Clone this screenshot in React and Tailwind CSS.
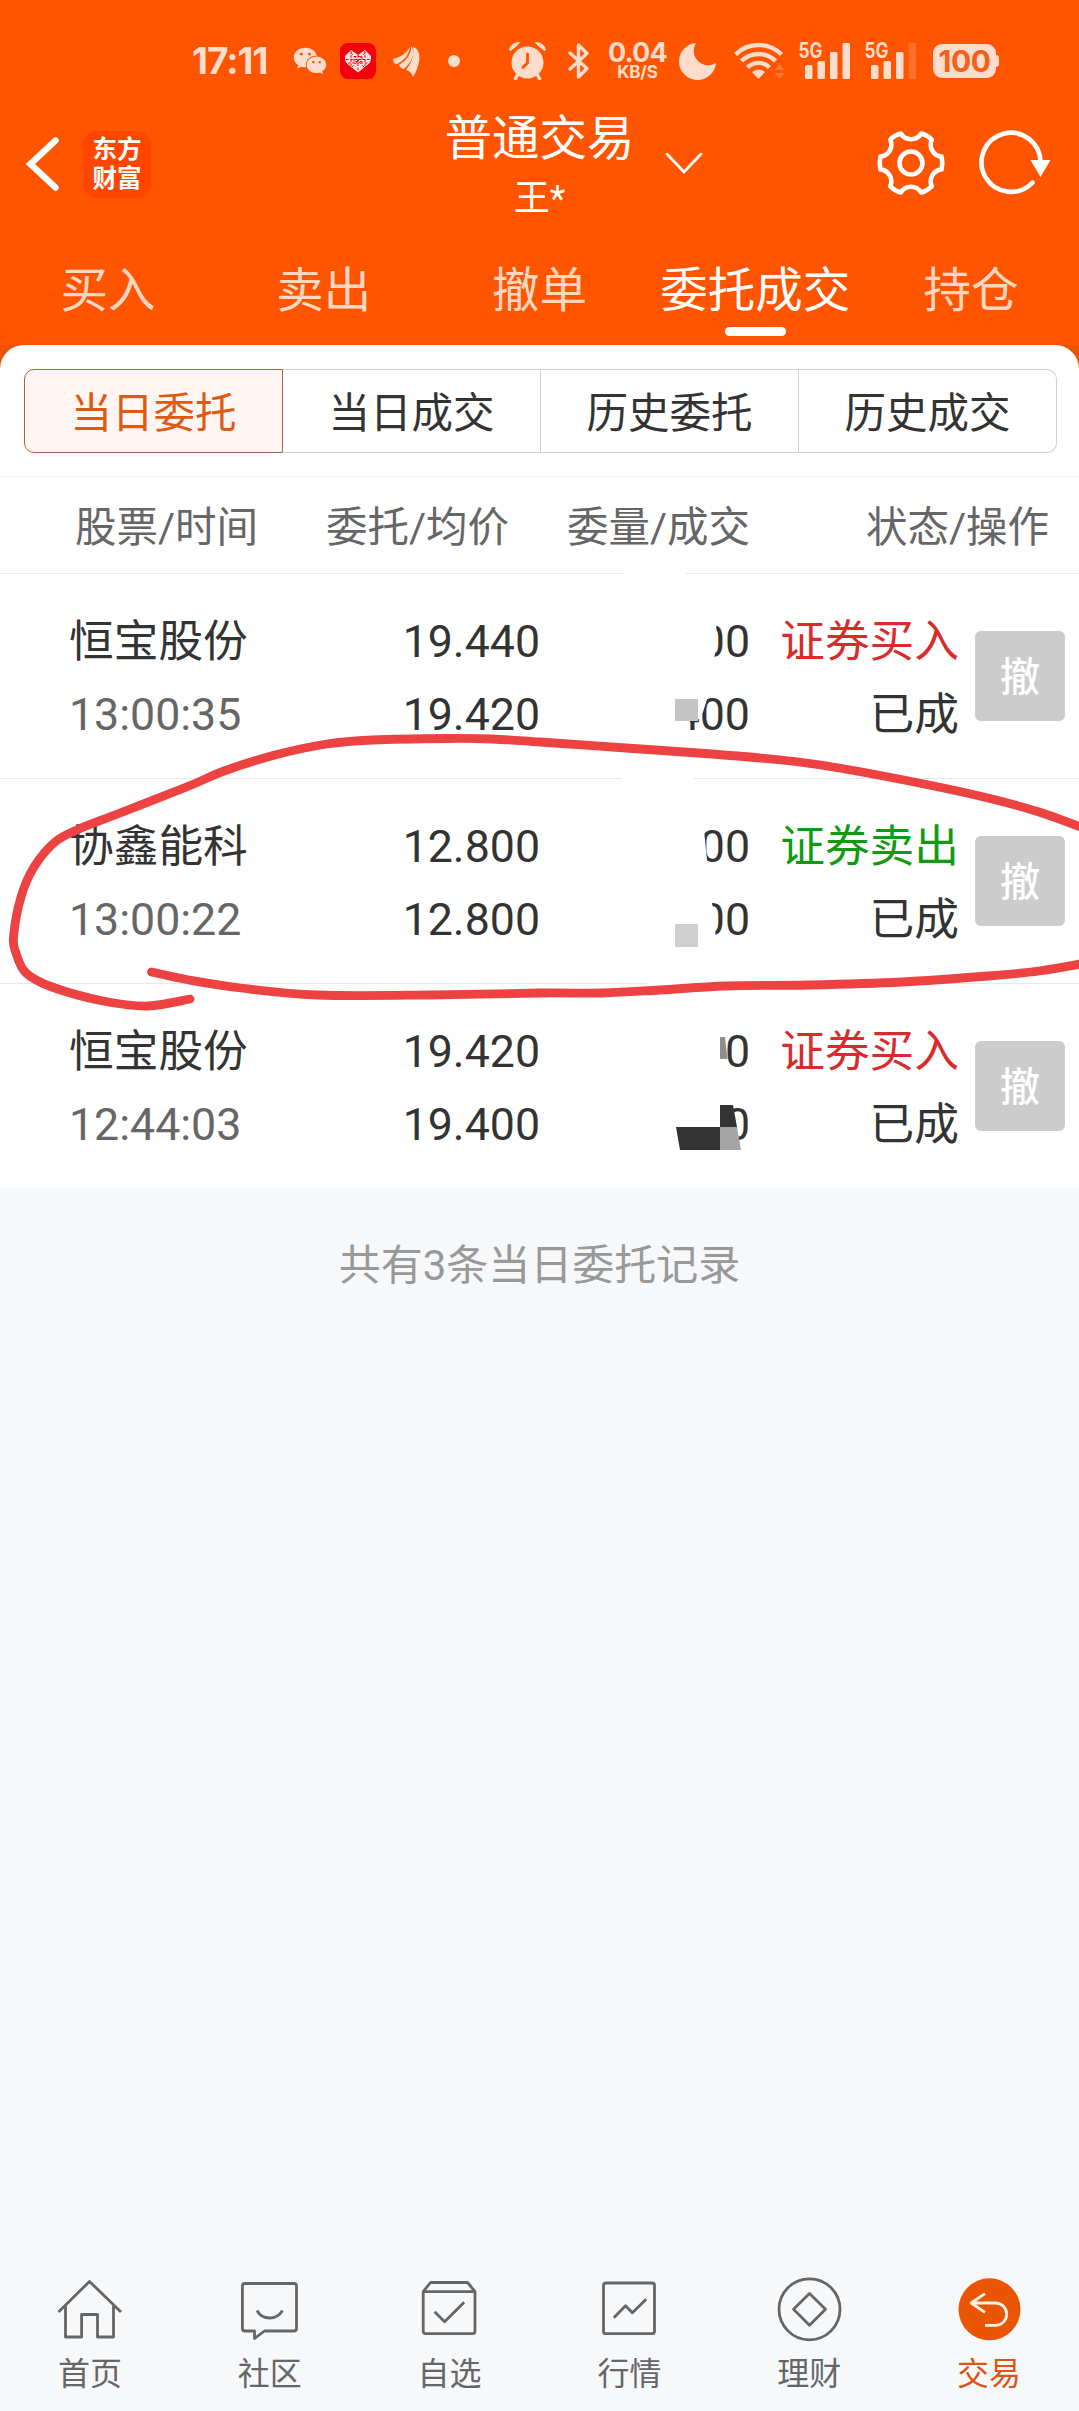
import { FaWeixin } from 'react-icons/fa'

const tabs = ['买入', '卖出', '撤单', '委托成交', '持仓']

const segments = ['当日委托', '当日成交', '历史委托', '历史成交']

const orders = [
  {
    name: '恒宝股份',
    time: '13:00:35',
    price: '19.440',
    average: '19.420',
    amount: '00',
    filled: '400',
    side: 'buy',
  },
  {
    name: '协鑫能科',
    time: '13:00:22',
    price: '12.800',
    average: '12.800',
    amount: '00',
    filled: '00',
    side: 'sell',
  },
  {
    name: '恒宝股份',
    time: '12:44:03',
    price: '19.420',
    average: '19.400',
    amount: '0',
    filled: '0',
    side: 'buy',
  },
]

const Signal = ({ weak }) => (
  <svg
    viewBox="0 0 51 38"
    className="h-[38px] w-[51px] overflow-visible"
    fill="currentColor"
  >
    <text
      x="-0.500"
      y="16"
      fontSize="21"
      fontWeight="700"
      textLength="24"
      lengthAdjust="spacingAndGlyphs"
    >
      5G
    </text>
    <rect x="6" y="23" width="7.5" height="14" rx="1.5" />
    <rect x="18.5" y="19" width="7.5" height="18" rx="1.5" />
    <rect x="31" y="10" width="7.5" height="27" rx="1.5" />
    <rect
      x="43.5"
      y="1"
      width="7.5"
      height="36"
      rx="1.5"
      opacity={weak ? 0.2 : 1}
    />
  </svg>
)

const StatusBar = () => (
  <div className="flex h-[102px] items-center pt-[20px] pl-[192px] text-[#ffdccb]">
    <span className="w-[75px] font-['Inter'] text-[37px] font-bold tracking-[-1px] whitespace-nowrap">
      17:11
    </span>
    <FaWeixin className="ml-[26px] h-[36px] w-[34px]" />
    <svg viewBox="0 0 36 36" className="ml-[13px] h-[36px] w-[36px]">
      <rect width="36" height="36" rx="8" fill="#f3000d" />
      <path
        d="M18 29.500 L7.500 21 Q4.500 18 5 13 L11 7 L18 12 L25 7 L31 13 Q31.500 18 28.500 21 Z"
        fill="#ffe3e3"
      />
      <path
        d="M18 12 V29 M6 16.500 H30 M11 8 V24 M25 8 V24 M11 10 L24 24 M25 10 L12 24 M8 20 H28 M14 13.500 h8 v5 h-8 z"
        stroke="#f3000d"
        strokeWidth="1"
        strokeDasharray="2.600 1.600"
        fill="none"
      />
    </svg>
    <svg
      viewBox="0 0 27 31"
      className="ml-[17px] h-[31px] w-[27px]"
      fill="currentColor"
    >
      <path d="M0 13 Q12 10 17 1 Q16 12 4 18 Q0 18 0 13Z" />
      <path d="M6 19 Q18 12 18.500 0 Q24 11 11 23 Q8 23 6 19Z" />
      <path d="M13 24 Q22 13 20 1 Q28 3 26 16 Q24 25 20 31 Q18 25 13 24Z" />
    </svg>
    <span className="ml-[28px] h-3 w-3 rounded-full bg-[#ffdccb]" />
    <svg
      viewBox="0 0 37 38"
      className="ml-[49px] h-[38px] w-[37px]"
      fill="currentColor"
    >
      <circle cx="18.500" cy="20.500" r="16" />
      <path d="M0 8 Q2 0 11 0 Q11 2 1.500 9Z M37 8 Q35 0 26 0 Q26 2 35.500 9Z" />
      <path
        d="M9 32 L6.500 36.500 M28 32 L30.500 36.500"
        stroke="currentColor"
        strokeWidth="3.500"
        strokeLinecap="round"
      />
      <path
        d="M18.500 12 V21 L14 25.500"
        fill="none"
        stroke="#ff5500"
        strokeWidth="2.800"
        strokeLinecap="round"
      />
    </svg>
    <svg
      viewBox="0 0 23 38"
      className="ml-[21px] h-[38px] w-[23px]"
      fill="none"
      stroke="currentColor"
      strokeWidth="3.400"
      strokeLinecap="round"
      strokeLinejoin="round"
    >
      <path d="M3 11 L20 26.500 L11.500 35 V3 L20 11.500 L3 27" />
    </svg>
    <div className="ml-[18px] flex h-[38px] w-[59px] flex-col items-center font-['Inter'] font-bold">
      <span className="text-[27px] leading-[21px] tracking-[-0.8px] whitespace-nowrap">
        0.04
      </span>
      <span className="pt-[1px] text-[17px] leading-[17px] tracking-[-0.2px] whitespace-nowrap">
        KB/S
      </span>
    </div>
    <svg
      viewBox="0 0 37 38"
      className="ml-[12px] h-[38px] w-[37px]"
      fill="currentColor"
    >
      <path d="M17 1 A18.500 18.500 0 1 0 37 21 A14.500 14.500 0 0 1 17 1Z" />
    </svg>
    <svg
      viewBox="0 0 51 38"
      className="ml-[18px] h-[38px] w-[51px]"
      fill="none"
      stroke="currentColor"
      strokeWidth="4.400"
    >
      <path d="M1.500 12.500 A32.500 32.500 0 0 1 47.500 12.500" />
      <path d="M7.500 19 A24 24 0 0 1 41.500 19" />
      <path d="M13.500 25.500 A15.500 15.500 0 0 1 35.500 25.500" />
      <path
        d="M24.500 37 L18 30 Q24.500 25 31 30Z"
        fill="currentColor"
        stroke="none"
      />
      <path
        d="M40.500 28 L45.500 22 L50.500 28Z M40.500 31 L45.500 37 L50.500 31Z"
        fill="currentColor"
        stroke="none"
        opacity="0.25"
      />
    </svg>
    <div className="ml-[14px] font-['Inter']">
      <Signal />
    </div>
    <div className="ml-[15px] font-['Inter']">
      <Signal weak />
    </div>
    <div className="ml-[17px] flex items-center">
      <span className="flex h-[34px] w-[63px] items-center justify-center rounded-[9px] bg-[#ffdccb] font-['Inter'] text-[30px] font-bold tracking-[-0.5px] text-[#f2601a]">
        100
      </span>
      <span className="h-3 w-[3px] rounded-r-sm bg-[#ffdccb]" />
    </div>
  </div>
)

const TitleBar = () => (
  <div className="grid h-[124px] grid-cols-[1fr_190px_1fr] text-white">
    <div className="flex items-center pl-[26px]">
      <svg
        viewBox="0 0 34 56"
        className="h-[56px] w-[34px]"
        fill="none"
        stroke="currentColor"
        strokeWidth="6.500"
        strokeLinecap="round"
      >
        <path d="M29.500 4.500 L4.500 28 L29.500 51.500" />
      </svg>
      <div className="ml-[23px] flex h-[67px] w-[68px] flex-col items-center justify-center rounded-[14px] bg-[#ff4500] text-[24.5px] leading-[29px] font-bold">
        <span>东方</span>
        <span>财富</span>
      </div>
    </div>
    <div className="flex flex-col items-center pt-[5px]">
      <span className="text-[47.5px] leading-[64px] whitespace-nowrap">
        普通交易
      </span>
      <span className="pt-[4px] text-[36px] leading-[48px]">王*</span>
    </div>
    <div className="flex items-center pl-[30px]">
      <svg
        viewBox="0 0 38 22"
        className="h-[22px] w-[38px]"
        fill="none"
        stroke="currentColor"
        strokeWidth="2.800"
        strokeLinecap="round"
      >
        <path d="M2 1 L19 19 L36 1" />
      </svg>
      <svg
        viewBox="-36 -36 72 72"
        className="ml-[172px] h-[72px] w-[72px]"
        fill="none"
        stroke="currentColor"
        strokeWidth="4.600"
        strokeLinejoin="round"
      >
        <path
          transform="translate(0 -1)"
          d="M30.600 -6.400 Q32 0 30.600 6.400 A12 12 0 0 0 20.800 23.400 Q16 28 10.200 29.500 A12 12 0 0 0 -10.200 29.500 Q-16 28 -20.800 23.400 A12 12 0 0 0 -30.600 6.400 Q-32 0 -30.600 -6.400 A12 12 0 0 0 -20.800 -23.400 Q-16 -28 -10.200 -29.500 A12 12 0 0 0 10.200 -29.500 Q16 -28 20.800 -23.400 A12 12 0 0 0 30.600 -6.400Z"
        />
        <circle cy="-1" r="11.500" />
      </svg>
      <svg
        viewBox="-34 -33 74 68"
        className="ml-[30px] h-[68px] w-[74px]"
        fill="none"
        stroke="currentColor"
        strokeWidth="4.600"
        strokeLinecap="round"
      >
        <path d="M21.500 19.500 A29.500 29.500 0 1 1 29.500 0" />
        <path
          d="M19.500 -3 H39.500 L29.500 14Z"
          fill="currentColor"
          stroke="none"
        />
      </svg>
    </div>
  </div>
)

const Tabs = () => (
  <div className="grid h-[119px] grid-cols-5 text-[47.5px] leading-[64px] text-[#ffd7c2]">
    {tabs.map((tab) =>
      tab === '委托成交' ? (
        <div
          key={tab}
          className="flex flex-col items-center pt-[33px] text-white"
        >
          <span className="whitespace-nowrap">{tab}</span>
          <span className="mt-[4px] h-[9px] w-[61px] rounded-full bg-white" />
        </div>
      ) : (
        <div key={tab} className="pt-[33px] text-center">
          {tab}
        </div>
      )
    )}
  </div>
)

const Segments = () => (
  <div className="flex h-[131px] pt-[24px] pr-[22px] pl-[24px] text-[41.5px] leading-[64px] text-[#333]">
    {segments.map((segment, i) => (
      <div
        key={segment}
        className={
          i === 0
            ? 'h-[84px] flex-1 rounded-l-[10px] border border-[#b0653c] bg-[#fff6f3] pt-[12px] text-center text-[#dd5a12]'
            : 'h-[84px] flex-1 border-y border-r border-[#cfd0d1] pt-[12px] text-center last:rounded-r-[10px]'
        }
      >
        {segment}
      </div>
    ))}
  </div>
)

const OrderRow = ({ order }) => (
  <div className="flex h-[205px] items-center border-t border-[#e8e8e8] text-[44.7px] leading-[73px] text-[#333]">
    <div className="w-[240px] pt-[6px] pl-[69px] whitespace-nowrap">
      <div>{order.name}</div>
      <div className="text-[#666]">{order.time}</div>
    </div>
    <div className="w-[300px] pt-[6px] text-right">
      <div>{order.price}</div>
      <div>{order.average}</div>
    </div>
    <div className="w-[210px] pt-[6px] text-right">
      <div>{order.amount}</div>
      <div>{order.filled}</div>
    </div>
    <div className="w-[209px] pt-[6px] text-right">
      <div
        className={order.side === 'buy' ? 'text-[#d92b2b]' : 'text-[#0f9b0f]'}
      >
        {order.side === 'buy' ? '证券买入' : '证券卖出'}
      </div>
      <div>已成</div>
    </div>
    <button className="ml-[16px] h-[90px] w-[90px] rounded-[6px] bg-[#ccc] pt-[4px] text-[40px] leading-[86px] font-medium text-white">
      撤
    </button>
  </div>
)

// Turns a list of points into a smooth curve through them
const smooth = (points) => {
  let d = `M${points[0][0]} ${points[0][1]}`
  for (let i = 0; i < points.length - 1; i++) {
    const p0 = points[i - 1] || points[i]
    const p1 = points[i]
    const p2 = points[i + 1]
    const p3 = points[i + 2] || p2
    d += ` C${p1[0] + (p2[0] - p0[0]) / 6} ${p1[1] + (p2[1] - p0[1]) / 6}`
    d += ` ${p2[0] - (p3[0] - p1[0]) / 6} ${p2[1] - (p3[1] - p1[1]) / 6}`
    d += ` ${p2[0]} ${p2[1]}`
  }
  return d
}

const upperStroke = [
  [190, 999], [148, 1006], [103, 1001], [52, 987], [26, 973], [16, 953],
  [13.5, 937], [21, 897], [34, 867], [55, 842], [79, 829], [120, 813],
  [189, 786], [224, 771], [275, 755], [327, 744], [372, 740], [448, 738.5],
  [492, 739], [540, 742], [626, 748], [712, 754], [781, 760], [833, 767],
  [919, 783], [988, 798], [1039, 812], [1086, 829],
]

const lowerStroke = [
  [151.5, 972], [189, 980], [241, 988], [317, 995], [430, 995], [540, 993],
  [602, 993], [660, 990], [726, 986], [809, 985], [902, 982], [988, 976],
  [1039, 971], [1086, 963],
]

// Hidden amounts and the pen marks, drawn over the list
const Markup = () => (
  <svg
    viewBox="0 345 1079 843"
    className="pointer-events-none absolute inset-0 h-[843px] w-full"
  >
    <g fill="#fff">
      <rect x="624" y="570" width="62" height="6" />
      <rect x="622" y="775" width="72" height="6" />
      <rect x="647" y="980" width="60" height="6" />
      <path d="M660 615 H715 Q719 640 713 664 H660Z" />
      <path d="M660 690 H710 L703 712 L699 719 L690 721 V738 H660Z" />
      <path d="M660 820 H703 L708 870 H660Z" />
      <path d="M660 895 H710 Q717 920 715 942 H660Z" />
    </g>
    <rect x="675" y="699" width="23" height="22" fill="#c4c4c4" />
    <rect x="675" y="924" width="23" height="23" fill="#cfcfcf" />
    <path d="M720 1037 H725 L727.500 1059 H720Z" fill="#8f8f8f" />
    <path
      d="M720 1105 H733 L737 1127 H720 V1150 H680 L676 1127 H720Z"
      fill="#333"
    />
    <path d="M720 1127 H737 L741 1150 H720Z" fill="#a5a5a5" />
    <g
      fill="none"
      stroke="#ec4242"
      strokeWidth="8.800"
      strokeLinecap="round"
      strokeLinejoin="round"
    >
      <path d={smooth(upperStroke)} />
      <path d={smooth(lowerStroke)} />
    </g>
  </svg>
)

const navItems = [
  {
    label: '首页',
    icon: (
      <path d="M1.500 35 L32.500 4.500 L64 35 M8.500 29 V60 H24.600 V37.500 H40.500 V60 H56.500 V29" />
    ),
  },
  {
    label: '社区',
    icon: (
      <>
        <path d="M8 6.500 H57 Q59.500 6.500 59.500 9 V51.500 Q59.500 54 57 54 H27.500 L17.500 61.500 V54 H8 Q5.400 54 5.400 51.500 V9 Q5.400 6.500 8 6.500Z" />
        <path d="M20 33.500 Q24 41 32.500 41 Q41 41 45.500 33.500" />
      </>
    ),
  },
  {
    label: '自选',
    icon: (
      <>
        <path d="M6.200 14.700 L13.500 5.500 H50.600 L58 14.700 V54 Q58 56.700 55.500 56.700 H8.700 Q6.200 56.700 6.200 54Z M6.200 14.700 H58" />
        <path d="M17.600 34.700 L27.600 44.700 L47.200 25.300" />
      </>
    ),
  },
  {
    label: '行情',
    icon: (
      <>
        <rect x="7.500" y="6" width="51" height="50.700" rx="2.500" />
        <path d="M17.800 40.700 L29.500 28.700 L36.400 35.700 L50.200 22.300" />
      </>
    ),
  },
  {
    label: '理财',
    icon: (
      <>
        <circle cx="33.500" cy="32.300" r="30.500" />
        <path d="M33.500 16.500 L49.500 32.300 L33.500 48.200 L17.500 32.300Z" />
      </>
    ),
  },
  {
    label: '交易',
    active: true,
    icon: (
      <>
        <circle cx="33.500" cy="32.300" r="31" fill="#ea5504" stroke="none" />
        <path
          d="M29 16.700 L15.200 26 L29 35.300 M15.200 26 H39.500 A11.200 11.200 0 0 1 39.500 48.400 H29"
          stroke="#fff3e6"
        />
      </>
    ),
  },
]

const BottomNav = () => (
  <nav className="mt-auto grid h-[134px] grid-cols-6 text-[32px] leading-[48px]">
    {navItems.map((item) => (
      <div
        key={item.label}
        className={
          item.active
            ? 'flex flex-col items-center text-[#d95614]'
            : 'flex flex-col items-center text-[#666]'
        }
      >
        <svg
          viewBox="0 0 66 66"
          className="h-[66px] w-[66px]"
          fill="none"
          stroke="currentColor"
          strokeWidth="2.800"
          strokeLinejoin="round"
        >
          {item.icon}
        </svg>
        <span className="pt-[7px]">{item.label}</span>
      </div>
    ))}
  </nav>
)

const App = () => {
  return (
    <div className="flex h-[2411px] w-[1079px] flex-col overflow-hidden bg-[#f7f8fa] font-['Roboto','Noto_Sans_CJK_SC',sans-serif]">
      <header className="bg-[#ff5500]">
        <StatusBar />
        <TitleBar />
        <Tabs />
      </header>
      <main className="relative bg-[#ea5504]">
        <div className="rounded-t-[24px] bg-white">
          <Segments />
          <div className="flex h-[97px] items-center border-t border-[#f3f3f3] pt-[6px] text-[41.5px] whitespace-nowrap text-[#666]">
            <div className="w-[258px] text-right">股票/时间</div>
            <div className="w-[251px] text-right">委托/均价</div>
            <div className="w-[241px] text-right">委量/成交</div>
            <div className="w-[299px] text-right">状态/操作</div>
          </div>
          {orders.map((order) => (
            <OrderRow key={order.time} order={order} />
          ))}
        </div>
        <Markup />
      </main>
      <p className="pt-[46px] text-center text-[42px] leading-[64px] text-[#999]">
        共有3条当日委托记录
      </p>
      <BottomNav />
    </div>
  )
}

export default App
